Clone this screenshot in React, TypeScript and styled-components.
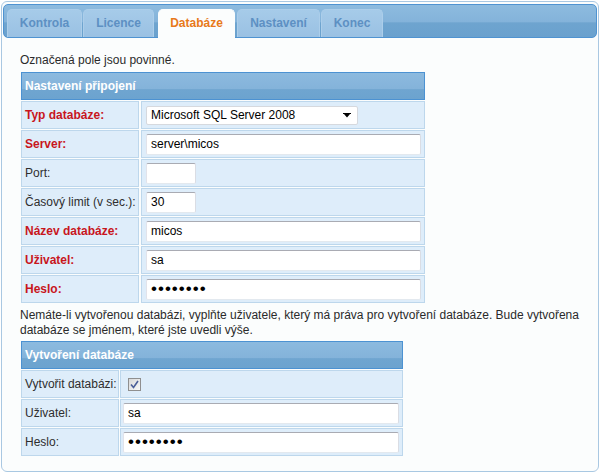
import styled, { createGlobalStyle } from "styled-components"

const GlobalStyle = createGlobalStyle`
  body {
    margin: 0;
    background: #ffffff;
    font-family: "Liberation Sans", Arial, sans-serif;
    font-size: 12px;
    color: #2a2a2a;
  }
`

const Panel = styled.div`
  box-sizing: border-box;
  margin: 1px;
  width: 598px;
  height: 471px;
  padding: 2px 1px;
  border: 1px solid #a9c8e2;
  border-radius: 6px;
  background: #fbfdfd;
`

const TabBar = styled.div`
  box-sizing: border-box;
  display: flex;
  align-items: flex-end;
  gap: 1px;
  height: 34px;
  padding-left: 3px;
  border: 1px solid #4f93d1;
  border-radius: 5px;
  background: linear-gradient(#8dbbdf 0%, #84b3da 52%, #6ea4cf 56%, #6aa1ce 100%);
`

const Tab = styled.div<{ $active?: boolean; $width: number }>`
  box-sizing: border-box;
  display: flex;
  align-items: center;
  justify-content: center;
  width: ${p => p.$width}px;
  height: ${p => (p.$active ? "29px" : "28px")};
  margin: ${p => (p.$active ? "0 1px -1px 3px" : "0")};
  padding-bottom: 2px;
  border: 1px solid ${p => (p.$active ? "#fbfdfd" : "#acceea")};
  border-bottom: none;
  border-radius: 5px 5px 0 0;
  background: ${p => (p.$active ? "#fbfdfd" : "linear-gradient(#a6cbe9, #9ac1e3)")};
  color: ${p => (p.$active ? "#e8791a" : "#5d90c3")};
  font-weight: bold;
  font-size: 12px;
`

const Content = styled.div`
  padding: 15px 10px 0 17px;
`

const Note = styled.p`
  margin: 0;
  line-height: 15px;
`

const Info = styled.p`
  margin: 5px 0 3px;
  line-height: 15px;
`

const Table = styled.div<{ $label: number; $value: number; $gap: number }>`
  display: grid;
  grid-template-columns: ${p => p.$label}px ${p => p.$value}px;
  column-gap: ${p => p.$gap}px;
  row-gap: 1px;
  margin-left: 1px;
`

const FirstTable = styled(Table)`
  margin-top: 4px;
`

const Header = styled.div`
  grid-column: 1 / -1;
  box-sizing: border-box;
  display: flex;
  align-items: center;
  height: 28px;
  padding-left: 3px;
  border: 1px solid #4c92d2;
  background: linear-gradient(#8cbadf 0%, #84b3da 60%, #6fa5d0 64%, #6ca3cf 100%);
  color: #ffffff;
  font-weight: bold;
`

const Cell = styled.div<{ $pad?: number }>`
  box-sizing: border-box;
  display: flex;
  align-items: center;
  height: 28px;
  padding-left: ${p => p.$pad ?? 3}px;
  border: 1px solid #bdd7ec;
  background: #deedfa;
`

const Label = styled(Cell)<{ $required?: boolean }>`
  color: ${p => (p.$required ? "#c8161d" : "#2e2e2e")};
  font-weight: ${p => (p.$required ? "bold" : "normal")};
  white-space: nowrap;
`

const TextInput = styled.input<{ $width: number }>`
  box-sizing: border-box;
  width: ${p => p.$width}px;
  height: 21px;
  padding: 0 0 0 4px;
  border: 1px solid;
  border-color: #a9abb3 #dadde4 #e3e9ef #e2e3ea;
  border-radius: 2px;
  background: #ffffff;
  font-family: "Liberation Sans", Arial, sans-serif;
  font-size: 12px;
  color: #000000;
  outline: none;
`

const PasswordInput = styled(TextInput)`
  font-size: 17px;
  letter-spacing: 1px;
`

const SelectBox = styled.div`
  position: relative;
  box-sizing: border-box;
  display: flex;
  align-items: center;
  width: 212px;
  height: 19px;
  padding-left: 4px;
  border: 1px solid #d6d9de;
  border-radius: 2px;
  background: #ffffff;
  color: #000000;
`

const Arrow = styled.svg`
  position: absolute;
  right: 6px;
  top: 6px;
`

const Check = styled.div`
  box-sizing: border-box;
  width: 13px;
  height: 13px;
  margin-left: 4px;
  border: 1px solid #8f8f8f;
  background: linear-gradient(135deg, #d8d8d8, #f8f8f8);
  display: flex;
  align-items: center;
  justify-content: center;
`

const tabs = [
  { name: "Kontrola", width: 75 },
  { name: "Licence", width: 71 },
  { name: "Databáze", width: 77, active: true },
  { name: "Nastavení", width: 83 },
  { name: "Konec", width: 62 },
]

const App = () => {
  return (
    <>
      <GlobalStyle />
      <Panel>
        <TabBar>
          {tabs.map(t => (
            <Tab key={t.name} $width={t.width} $active={t.active}>
              {t.name}
            </Tab>
          ))}
        </TabBar>

        <Content>
          <Note>Označená pole jsou povinné.</Note>

          <FirstTable $label={118} $value={284} $gap={2}>
            <Header>Nastavení připojení</Header>

            <Label $required>Typ databáze:</Label>
            <Cell $pad={4}>
              <SelectBox>
                Microsoft SQL Server 2008
                <Arrow width="8" height="5" viewBox="0 0 8 5">
                  <path d="M0 0H8V1H7L4 4.5L1 1H0Z" fill="#000" />
                </Arrow>
              </SelectBox>
            </Cell>

            <Label $required>Server:</Label>
            <Cell $pad={4}>
              <TextInput $width={275} defaultValue="server\micos" />
            </Cell>

            <Label>Port:</Label>
            <Cell $pad={4}>
              <TextInput $width={50} defaultValue="" />
            </Cell>

            <Label>Časový limit (v sec.):</Label>
            <Cell $pad={4}>
              <TextInput $width={50} defaultValue="30" />
            </Cell>

            <Label $required>Název databáze:</Label>
            <Cell $pad={4}>
              <TextInput $width={275} defaultValue="micos" />
            </Cell>

            <Label $required>Uživatel:</Label>
            <Cell $pad={4}>
              <TextInput $width={275} defaultValue="sa" />
            </Cell>

            <Label $required>Heslo:</Label>
            <Cell $pad={4}>
              <PasswordInput $width={275} type="password" defaultValue="password" />
            </Cell>
          </FirstTable>

          <Info>
            Nemáte-li vytvořenou databázi, vyplňte uživatele, který má práva pro vytvoření databáze. Bude vytvořena
            databáze se jménem, které jste uvedli výše.
          </Info>

          <Table $label={98} $value={283} $gap={1}>
            <Header>Vytvoření databáze</Header>

            <Label>Vytvořit databázi:</Label>
            <Cell $pad={3}>
              <Check>
                <svg width="9" height="9" viewBox="0 0 9 9">
                  <path d="M1 4.5L3.5 7.5L8 1" fill="none" stroke="#4b5e98" strokeWidth="1.6" />
                </svg>
              </Check>
            </Cell>

            <Label>Uživatel:</Label>
            <Cell $pad={2}>
              <TextInput $width={276} defaultValue="sa" />
            </Cell>

            <Label>Heslo:</Label>
            <Cell $pad={2}>
              <PasswordInput $width={276} type="password" defaultValue="password" />
            </Cell>
          </Table>
        </Content>
      </Panel>
    </>
  )
}

export default App
